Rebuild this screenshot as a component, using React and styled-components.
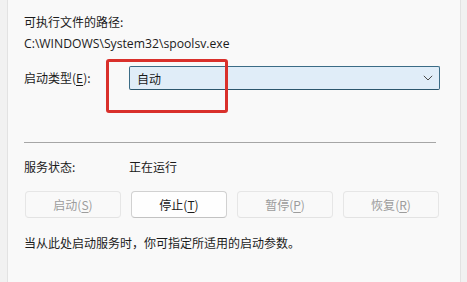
import React from 'react';
import styled, { createGlobalStyle } from 'styled-components';

const GlobalStyle = createGlobalStyle`
  html, body {
    margin: 0;
    padding: 0;
    background: #f9f9f9;
  }
  body {
    font-family: "Noto Sans CJK SC", "Noto Sans", sans-serif;
    font-size: 12px;
    color: #1b1b1b;
  }
`;

const Window = styled.div`
  display: flex;
  width: 467px;
  height: 282px;
  overflow: hidden;
  background: #f9f9f9;
`;

const EdgeStrip = styled.div`
  flex: 0 0 ${(p) => p.$width}px;
  background: #f1f1f1;
  border-${(p) => (p.$side === 'left' ? 'right' : 'left')}: 1px solid #e2e2e2;
`;

const Panel = styled.div`
  flex: 1;
  display: flex;
  flex-direction: column;
  padding: 14px 0 0 16px;
`;

const Text = styled.div`
  line-height: 16px;
  height: 16px;
  white-space: nowrap;
  margin-top: ${(p) => p.$mt || 0}px;
  color: ${(p) => (p.$muted ? '#9c9c9c' : '#1b1b1b')};
`;

const PathText = styled(Text)`
  font-family: "Open Sans", "Noto Sans", sans-serif;
  font-size: 12.2px;
`;

const FieldRow = styled.div`
  position: relative;
  display: flex;
  align-items: center;
  margin-top: ${(p) => p.$mt || 0}px;
`;

const Label = styled.div`
  flex: 0 0 105px;
  line-height: 16px;
  white-space: nowrap;
`;

const Key = styled.span`
  text-decoration: underline;
  text-underline-offset: 2px;
`;

const Select = styled.div`
  width: 311px;
  height: 24px;
  box-sizing: border-box;
  display: flex;
  align-items: center;
  justify-content: space-between;
  padding: 0 6px 0 7px;
  background: #e0edf8;
  border: 1px solid #3b6c86;
  border-bottom-color: #2c566d;
  border-radius: 2px;
`;

const Highlight = styled.div`
  position: absolute;
  left: 82px;
  top: -7px;
  width: 122px;
  height: 54px;
  box-sizing: border-box;
  border: 3px solid #d9302b;
  border-radius: 3px;
  pointer-events: none;
`;

const Divider = styled.div`
  width: 412px;
  height: 1px;
  background: #a6a6a6;
  margin-top: 52px;
`;

const ButtonRow = styled.div`
  display: flex;
  gap: 10px;
  margin-top: 16px;
  padding-left: 1px;
`;

const Button = styled.div`
  width: 96px;
  height: 27px;
  box-sizing: border-box;
  display: flex;
  align-items: center;
  justify-content: center;
  border-radius: 4px;
  background: ${(p) => (p.$disabled ? '#f9f9f9' : '#fefefe')};
  border: 1px solid ${(p) => (p.$disabled ? '#e6e6e6' : '#d1d1d1')};
  border-bottom-color: ${(p) => (p.$disabled ? '#e3e3e3' : '#c2c2c2')};
  color: ${(p) => (p.$disabled ? '#9c9c9c' : '#1b1b1b')};
`;

const Chevron = () => (
  <svg width="10" height="6" viewBox="0 0 10 6" fill="none">
    <path d="M0.8 0.8 L5 5 L9.2 0.8" stroke="#4a4a4a" strokeWidth="1" />
  </svg>
);

const buttons = [
  { text: '启动', key: 'S', disabled: true },
  { text: '停止', key: 'T', disabled: false },
  { text: '暂停', key: 'P', disabled: true },
  { text: '恢复', key: 'R', disabled: true },
];

const App = () => {
  return (
    <>
      <GlobalStyle />
      <Window>
        <EdgeStrip $width={7} $side="left" />
        <Panel>
          <Text>可执行文件的路径:</Text>
          <PathText $mt={6}>C:\WINDOWS\System32\spoolsv.exe</PathText>
          <FieldRow $mt={14}>
            <Label>
              启动类型(<Key>E</Key>):
            </Label>
            <Select>
              <span>自动</span>
              <Chevron />
            </Select>
            <Highlight />
          </FieldRow>
          <Divider />
          <FieldRow $mt={15}>
            <Label>服务状态:</Label>
            <span>正在运行</span>
          </FieldRow>
          <ButtonRow>
            {buttons.map((b) => (
              <Button key={b.key} $disabled={b.disabled}>
                {b.text}(<Key>{b.key}</Key>)
              </Button>
            ))}
          </ButtonRow>
          <Text $mt={17}>当从此处启动服务时，你可指定所适用的启动参数。</Text>
        </Panel>
        <EdgeStrip $width={6} $side="right" />
      </Window>
    </>
  );
};

export default App;
